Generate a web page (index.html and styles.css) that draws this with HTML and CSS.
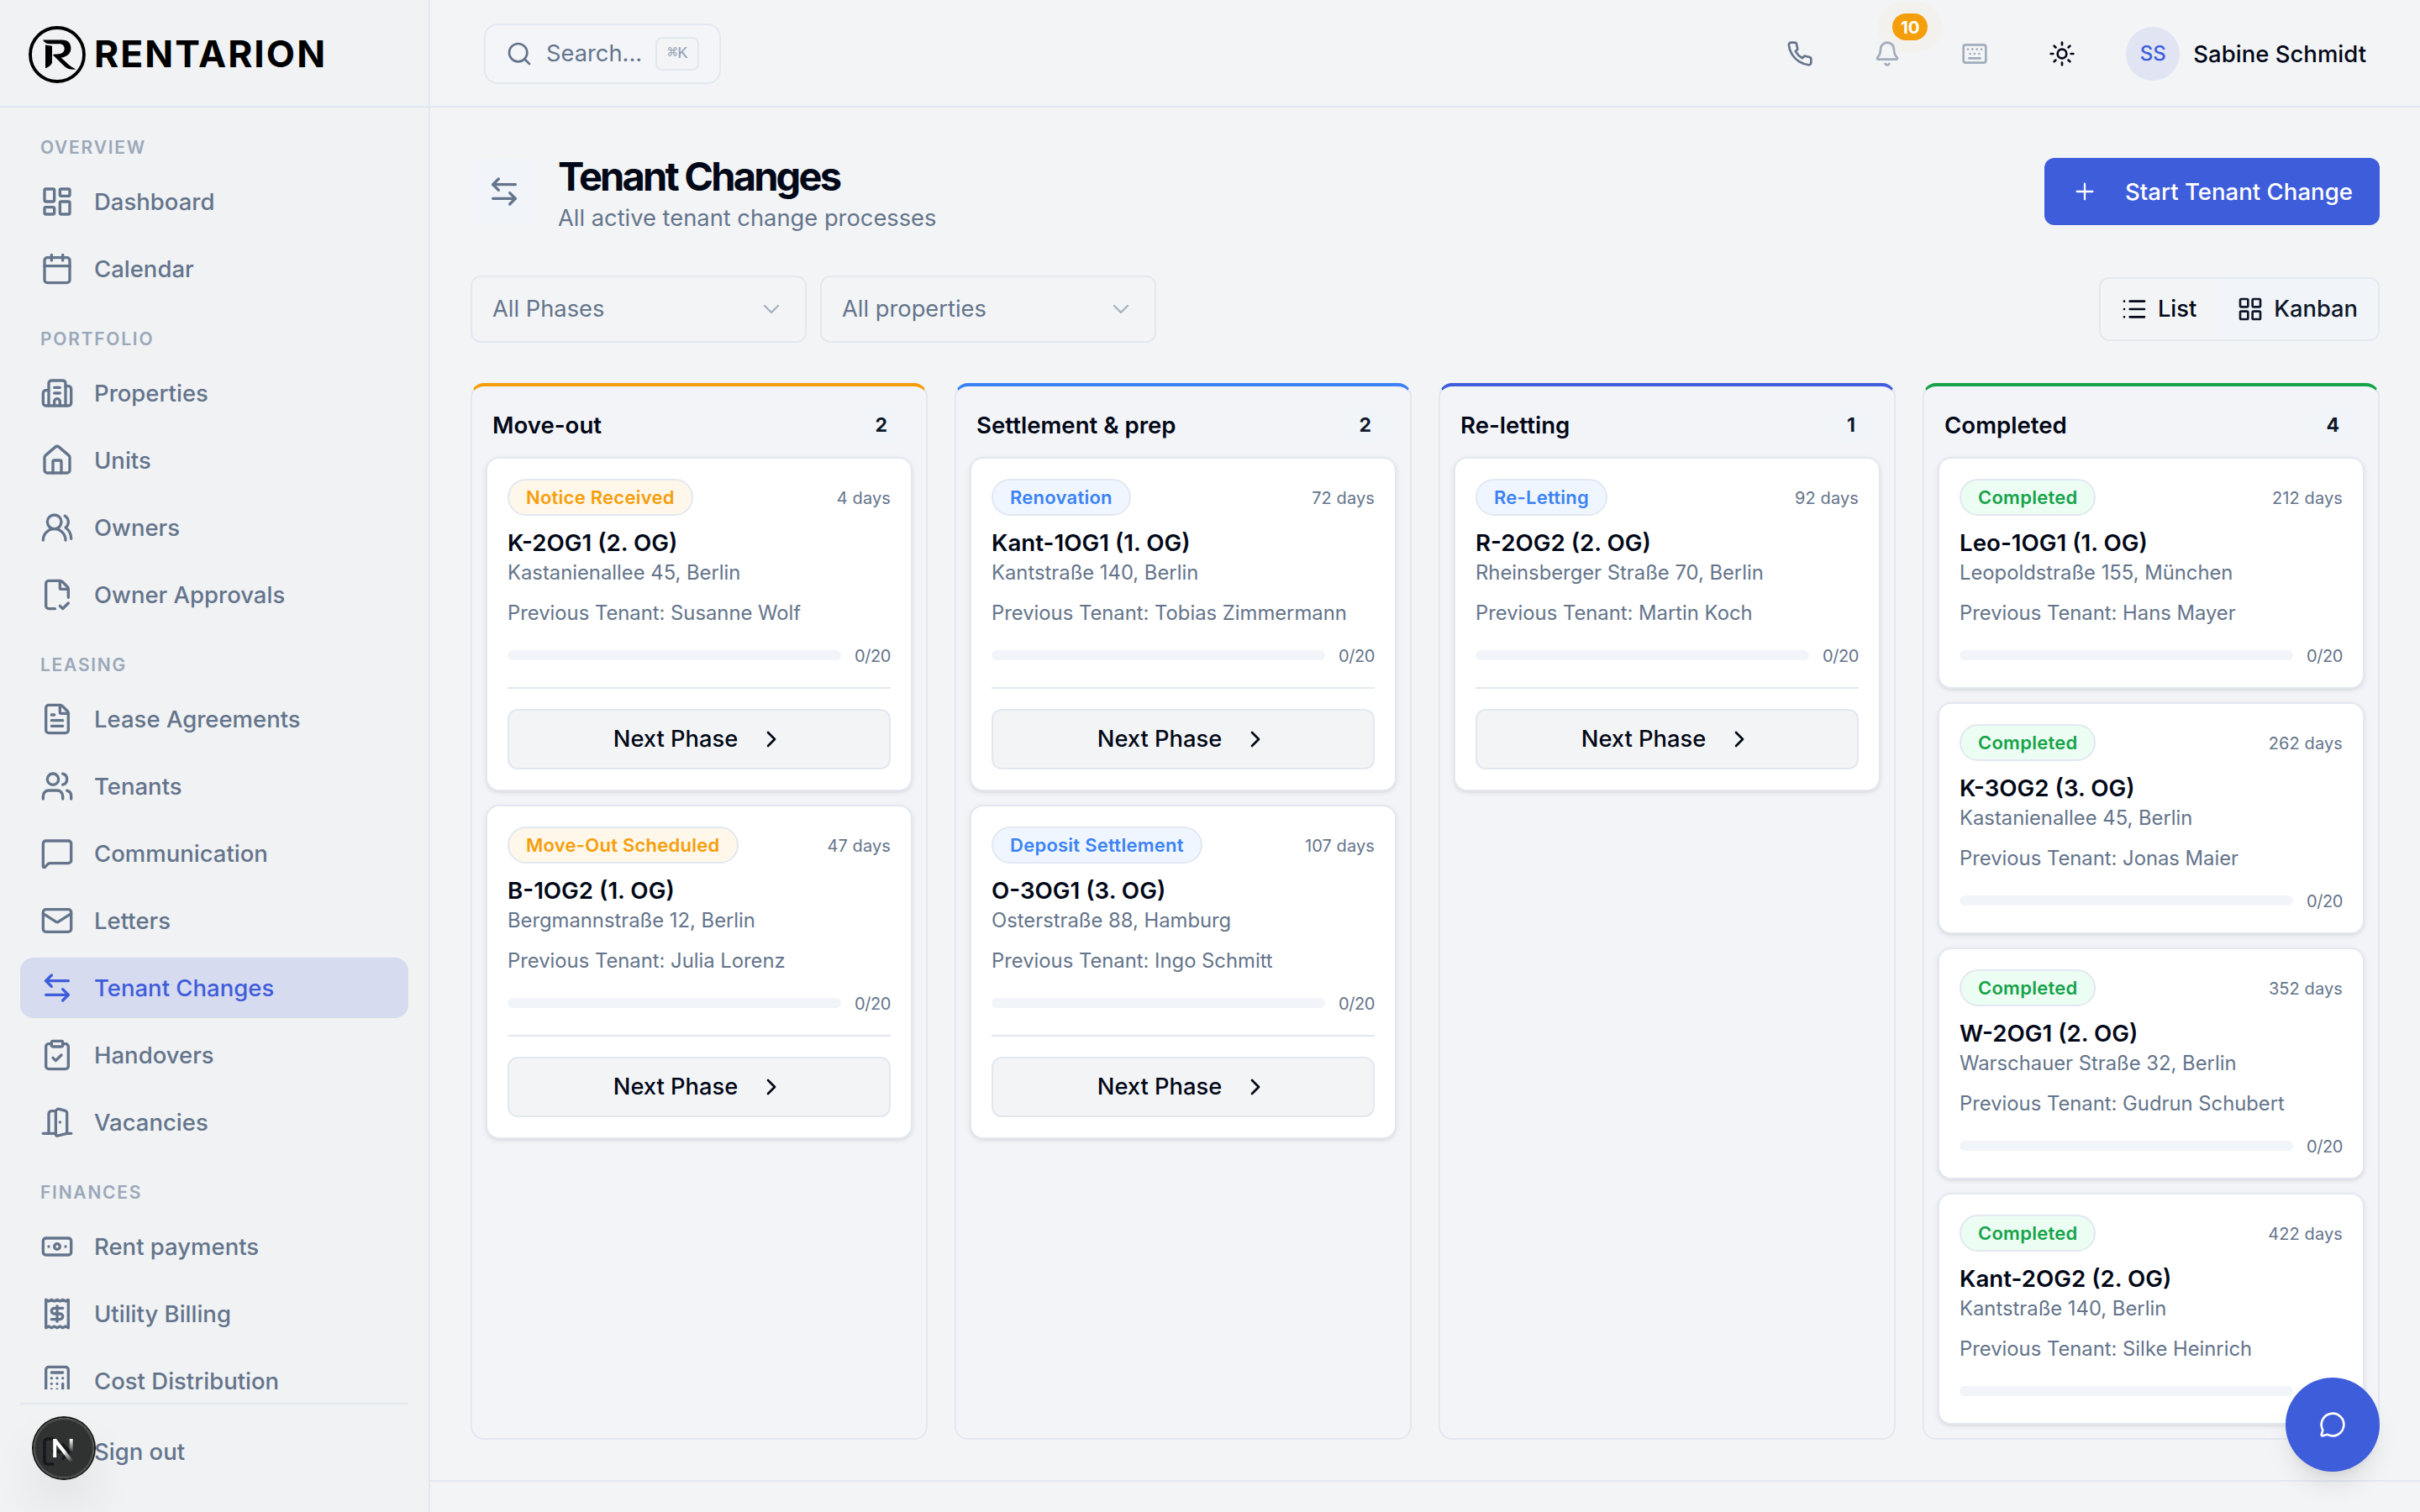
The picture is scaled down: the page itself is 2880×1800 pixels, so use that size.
FILE: index.html
```html
<!DOCTYPE html>
<html lang="en">

<head>
  <meta charset="utf-8">
  <meta name="viewport" content="width=device-width, initial-scale=1">
  <title>Tenant Changes - Rentarion</title>
  <link rel="stylesheet" href="styles.css">
</head>

<body>
  <!-- icon sprite -->
  <svg class="sprite" width="0" height="0">
    <symbol id="i-dashboard" viewBox="0 0 24 24"><rect width="7" height="9" x="3" y="3" rx="1"/><rect width="7" height="5" x="14" y="3" rx="1"/><rect width="7" height="9" x="14" y="12" rx="1"/><rect width="7" height="5" x="3" y="16" rx="1"/></symbol>
    <symbol id="i-calendar" viewBox="0 0 24 24"><path d="M8 2v4M16 2v4"/><rect width="18" height="18" x="3" y="4" rx="2"/><path d="M3 10h18"/></symbol>
    <symbol id="i-building" viewBox="0 0 24 24"><path d="M10 12h4M10 8h4M14 21v-3a2 2 0 0 0-4 0v3"/><path d="M6 10H4a2 2 0 0 0-2 2v7a2 2 0 0 0 2 2h16a2 2 0 0 0 2-2V9a2 2 0 0 0-2-2h-2"/><path d="M6 21V5a2 2 0 0 1 2-2h8a2 2 0 0 1 2 2v16"/></symbol>
    <symbol id="i-house" viewBox="0 0 24 24"><path d="M15 21v-8a1 1 0 0 0-1-1h-4a1 1 0 0 0-1 1v8"/><path d="M3 10a2 2 0 0 1 .709-1.528l7-5.999a2 2 0 0 1 2.582 0l7 5.999A2 2 0 0 1 21 10v9a2 2 0 0 1-2 2H5a2 2 0 0 1-2-2z"/></symbol>
    <symbol id="i-owners" viewBox="0 0 24 24"><path d="M18 21a8 8 0 0 0-16 0"/><circle cx="10" cy="8" r="5"/><path d="M22 20c0-3.37-2-6.5-4-8a5 5 0 0 0-.45-8.3"/></symbol>
    <symbol id="i-file-check" viewBox="0 0 24 24"><path d="M10.5 22H6a2 2 0 0 1-2-2V4a2 2 0 0 1 2-2h8a2.4 2.4 0 0 1 1.706.706l3.588 3.588A2.4 2.4 0 0 1 20 8v6"/><path d="M14 2v5a1 1 0 0 0 1 1h5"/><path d="m14 20 2 2 4-4"/></symbol>
    <symbol id="i-file-text" viewBox="0 0 24 24"><path d="M6 22a2 2 0 0 1-2-2V4a2 2 0 0 1 2-2h8a2.4 2.4 0 0 1 1.704.706l3.588 3.588A2.4 2.4 0 0 1 20 8v12a2 2 0 0 1-2 2z"/><path d="M14 2v5a1 1 0 0 0 1 1h5"/><path d="M10 9H8M16 13H8M16 17H8"/></symbol>
    <symbol id="i-users" viewBox="0 0 24 24"><path d="M16 21v-2a4 4 0 0 0-4-4H6a4 4 0 0 0-4 4v2"/><path d="M16 3.128a4 4 0 0 1 0 7.744"/><path d="M22 21v-2a4 4 0 0 0-3-3.87"/><circle cx="9" cy="7" r="4"/></symbol>
    <symbol id="i-message" viewBox="0 0 24 24"><path d="M22 17a2 2 0 0 1-2 2H6.828a2 2 0 0 0-1.414.586l-2.202 2.202A.71.71 0 0 1 2 21.286V5a2 2 0 0 1 2-2h16a2 2 0 0 1 2 2z"/></symbol>
    <symbol id="i-mail" viewBox="0 0 24 24"><path d="m22 7-8.991 5.727a2 2 0 0 1-2.009 0L2 7"/><rect x="2" y="4" width="20" height="16" rx="2"/></symbol>
    <symbol id="i-swap" viewBox="0 0 24 24"><path d="M8 3 4 7l4 4"/><path d="M4 7h16"/><path d="m16 21 4-4-4-4"/><path d="M20 17H4"/></symbol>
    <symbol id="i-clipboard" viewBox="0 0 24 24"><rect width="8" height="4" x="8" y="2" rx="1"/><path d="M16 4h2a2 2 0 0 1 2 2v14a2 2 0 0 1-2 2H6a2 2 0 0 1-2-2V6a2 2 0 0 1 2-2h2"/><path d="m9 14 2 2 4-4"/></symbol>
    <symbol id="i-door" viewBox="0 0 24 24"><path d="M11 20H2"/><path d="M11 4.562v16.157a1 1 0 0 0 1.242.97L19 20V5.562a2 2 0 0 0-1.515-1.94l-4-1A2 2 0 0 0 11 4.561z"/><path d="M11 4H8a2 2 0 0 0-2 2v14"/><path d="M14 12h.01"/><path d="M22 20h-3"/></symbol>
    <symbol id="i-banknote" viewBox="0 0 24 24"><rect width="20" height="12" x="2" y="6" rx="2"/><circle cx="12" cy="12" r="2"/><path d="M6 12h.01M18 12h.01"/></symbol>
    <symbol id="i-receipt" viewBox="0 0 24 24"><path d="M4 2v20l2-1 2 1 2-1 2 1 2-1 2 1 2-1 2 1V2l-2 1-2-1-2 1-2-1-2 1-2-1-2 1Z"/><path d="M16 8h-6a2 2 0 1 0 0 4h4a2 2 0 1 1 0 4H8"/><path d="M12 17.5v-11"/></symbol>
    <symbol id="i-calculator" viewBox="0 0 24 24"><rect width="16" height="20" x="4" y="2" rx="2"/><path d="M8 6h8M16 14v4M16 10h.01M12 10h.01M8 10h.01M12 14h.01M8 14h.01M12 18h.01M8 18h.01"/></symbol>
    <symbol id="i-logout" viewBox="0 0 24 24"><path d="m16 17 5-5-5-5"/><path d="M21 12H9"/><path d="M9 21H5a2 2 0 0 1-2-2V5a2 2 0 0 1 2-2h4"/></symbol>
    <symbol id="i-search" viewBox="0 0 24 24"><path d="m21 21-4.34-4.34"/><circle cx="11" cy="11" r="8"/></symbol>
    <symbol id="i-phone" viewBox="0 0 24 24"><path d="M22 16.92v3a2 2 0 0 1-2.18 2 19.79 19.79 0 0 1-8.63-3.07 19.5 19.5 0 0 1-6-6 19.79 19.79 0 0 1-3.07-8.67A2 2 0 0 1 4.11 2h3a2 2 0 0 1 2 1.72 12.84 12.84 0 0 0 .7 2.81 2 2 0 0 1-.45 2.11L8.09 9.91a16 16 0 0 0 6 6l1.27-1.27a2 2 0 0 1 2.11-.45 12.84 12.84 0 0 0 2.81.7A2 2 0 0 1 22 16.92z"/></symbol>
    <symbol id="i-bell" viewBox="0 0 24 24"><path d="M10.268 21a2 2 0 0 0 3.464 0"/><path d="M3.262 15.326A1 1 0 0 0 4 17h16a1 1 0 0 0 .74-1.673C19.41 13.956 18 12.499 18 8A6 6 0 0 0 6 8c0 4.499-1.411 5.956-2.738 7.326"/></symbol>
    <symbol id="i-keyboard" viewBox="0 0 24 24"><rect width="20" height="16" x="2" y="4" rx="2"/><path d="M10 8h.01M12 12h.01M14 8h.01M16 12h.01M18 8h.01M6 8h.01M7 16h10M8 12h.01"/></symbol>
    <symbol id="i-sun" viewBox="0 0 24 24"><circle cx="12" cy="12" r="4"/><path d="M12 2v2M12 20v2M4.93 4.93l1.41 1.41M17.66 17.66l1.41 1.41M2 12h2M20 12h2M6.34 17.66l-1.41 1.41M19.07 4.93l-1.41 1.41"/></symbol>
    <symbol id="i-plus" viewBox="0 0 24 24"><path d="M5 12h14M12 5v14"/></symbol>
    <symbol id="i-down" viewBox="0 0 24 24"><path d="m6 9 6 6 6-6"/></symbol>
    <symbol id="i-right" viewBox="0 0 24 24"><path d="m9 18 6-6-6-6"/></symbol>
    <symbol id="i-list" viewBox="0 0 24 24"><path d="M3 5h.01M3 12h.01M3 19h.01M8 5h13M8 12h13M8 19h13"/></symbol>
    <symbol id="i-grid" viewBox="0 0 24 24"><rect width="7" height="7" x="3" y="3" rx="1"/><rect width="7" height="7" x="14" y="3" rx="1"/><rect width="7" height="7" x="14" y="14" rx="1"/><rect width="7" height="7" x="3" y="14" rx="1"/></symbol>
    <symbol id="i-chat" viewBox="0 0 24 24"><path d="M2.992 16.342a2 2 0 0 1 .094 1.167l-1.065 3.29a1 1 0 0 0 1.236 1.168l3.413-.998a2 2 0 0 1 1.099.092 10 10 0 1 0-4.777-4.719"/></symbol>
  </svg>

  <div class="app">
    <aside class="sidebar">
      <div class="brand">
        <svg class="brand-mark" viewBox="0 0 68 68">
          <circle cx="34" cy="34" r="32" fill="none" stroke="#000" stroke-width="3.8"/>
          <path d="M17 16.5H40C47 16.5 50.4 20.500 50.4 26.500C50.400 32.500 46 36.800 38.700 37.600C45 43.500 50 49 56.700 51.500C51 52 46.500 51.500 43 48.300L28.700 34.200C31 33.300 33 33.600 36 33.300C40.500 32.800 42.700 30 42.700 27C42.700 23.500 40.500 21.200 36.700 21.200H25C21.500 21.200 18.500 19.500 17 16.500Z"/>
          <path d="M20 22.500L28 23.700V43.500C26.500 47 23.500 49.300 20 50.200Z"/>
        </svg>
        <span class="brand-name">RENTARION</span>
      </div>

      <nav class="nav">
        <div class="nav-group">
          <h2 class="nav-label">OVERVIEW</h2>
          <a class="nav-item"><svg class="icon"><use href="#i-dashboard"/></svg>Dashboard</a>
          <a class="nav-item"><svg class="icon"><use href="#i-calendar"/></svg>Calendar</a>
        </div>
        <div class="nav-group">
          <h2 class="nav-label">PORTFOLIO</h2>
          <a class="nav-item"><svg class="icon"><use href="#i-building"/></svg>Properties</a>
          <a class="nav-item"><svg class="icon"><use href="#i-house"/></svg>Units</a>
          <a class="nav-item"><svg class="icon"><use href="#i-owners"/></svg>Owners</a>
          <a class="nav-item"><svg class="icon"><use href="#i-file-check"/></svg>Owner Approvals</a>
        </div>
        <div class="nav-group">
          <h2 class="nav-label">LEASING</h2>
          <a class="nav-item"><svg class="icon"><use href="#i-file-text"/></svg>Lease Agreements</a>
          <a class="nav-item"><svg class="icon"><use href="#i-users"/></svg>Tenants</a>
          <a class="nav-item"><svg class="icon"><use href="#i-message"/></svg>Communication</a>
          <a class="nav-item"><svg class="icon"><use href="#i-mail"/></svg>Letters</a>
          <a class="nav-item active"><svg class="icon"><use href="#i-swap"/></svg>Tenant Changes</a>
          <a class="nav-item"><svg class="icon"><use href="#i-clipboard"/></svg>Handovers</a>
          <a class="nav-item"><svg class="icon"><use href="#i-door"/></svg>Vacancies</a>
        </div>
        <div class="nav-group">
          <h2 class="nav-label">FINANCES</h2>
          <a class="nav-item"><svg class="icon"><use href="#i-banknote"/></svg>Rent payments</a>
          <a class="nav-item"><svg class="icon"><use href="#i-receipt"/></svg>Utility Billing</a>
          <a class="nav-item"><svg class="icon"><use href="#i-calculator"/></svg>Cost Distribution</a>
        </div>
      </nav>

      <div class="sidebar-footer">
        <a class="nav-item"><svg class="icon"><use href="#i-logout"/></svg>Sign out</a>
      </div>
    </aside>

    <div class="page">
      <header class="topbar">
        <button class="search">
          <svg class="icon icon-sm"><use href="#i-search"/></svg>
          <span>Search...</span>
          <kbd>⌘K</kbd>
        </button>
        <div class="topbar-actions">
          <button class="icon-btn"><svg class="icon icon-sm"><use href="#i-phone"/></svg></button>
          <button class="icon-btn faded"><svg class="icon icon-sm"><use href="#i-bell"/></svg><span class="count-dot">10</span></button>
          <button class="icon-btn faded"><svg class="icon icon-sm"><use href="#i-keyboard"/></svg></button>
          <button class="icon-btn dark"><svg class="icon icon-sm"><use href="#i-sun"/></svg></button>
          <button class="user"><span class="avatar">SS</span>Sabine Schmidt</button>
        </div>
      </header>

      <main class="content">
        <div class="page-head">
          <div class="page-icon"><svg class="icon"><use href="#i-swap"/></svg></div>
          <div class="page-title">
            <h1>Tenant Changes</h1>
            <p>All active tenant change processes</p>
          </div>
          <button class="btn-primary"><svg class="icon icon-sm thin"><use href="#i-plus"/></svg>Start Tenant Change</button>
        </div>

        <div class="filters">
          <button class="select">All Phases<svg class="icon icon-sm thin"><use href="#i-down"/></svg></button>
          <button class="select">All properties<svg class="icon icon-sm thin"><use href="#i-down"/></svg></button>
          <div class="view-toggle">
            <button><svg class="icon icon-sm"><use href="#i-list"/></svg>List</button>
            <button class="on"><svg class="icon icon-sm"><use href="#i-grid"/></svg>Kanban</button>
          </div>
        </div>

        <div class="board">
          <section class="column orange">
            <div class="column-head"><h3>Move-out</h3><span class="count">2</span></div>
            <article class="card">
              <div class="card-top"><span class="badge">Notice Received</span><span class="days">4 days</span></div>
              <h4>K-2OG1 (2. OG)</h4>
              <p class="address">Kastanienallee 45, Berlin</p>
              <p class="tenant">Previous Tenant: Susanne Wolf</p>
              <div class="progress"><div class="bar"></div><span>0/20</span></div>
              <div class="card-action"><button>Next Phase<svg class="icon icon-sm"><use href="#i-right"/></svg></button></div>
            </article>
            <article class="card">
              <div class="card-top"><span class="badge">Move-Out Scheduled</span><span class="days">47 days</span></div>
              <h4>B-1OG2 (1. OG)</h4>
              <p class="address">Bergmannstraße 12, Berlin</p>
              <p class="tenant">Previous Tenant: Julia Lorenz</p>
              <div class="progress"><div class="bar"></div><span>0/20</span></div>
              <div class="card-action"><button>Next Phase<svg class="icon icon-sm"><use href="#i-right"/></svg></button></div>
            </article>
          </section>

          <section class="column blue">
            <div class="column-head"><h3>Settlement &amp; prep</h3><span class="count">2</span></div>
            <article class="card">
              <div class="card-top"><span class="badge">Renovation</span><span class="days">72 days</span></div>
              <h4>Kant-1OG1 (1. OG)</h4>
              <p class="address">Kantstraße 140, Berlin</p>
              <p class="tenant">Previous Tenant: Tobias Zimmermann</p>
              <div class="progress"><div class="bar"></div><span>0/20</span></div>
              <div class="card-action"><button>Next Phase<svg class="icon icon-sm"><use href="#i-right"/></svg></button></div>
            </article>
            <article class="card">
              <div class="card-top"><span class="badge">Deposit Settlement</span><span class="days">107 days</span></div>
              <h4>O-3OG1 (3. OG)</h4>
              <p class="address">Osterstraße 88, Hamburg</p>
              <p class="tenant">Previous Tenant: Ingo Schmitt</p>
              <div class="progress"><div class="bar"></div><span>0/20</span></div>
              <div class="card-action"><button>Next Phase<svg class="icon icon-sm"><use href="#i-right"/></svg></button></div>
            </article>
          </section>

          <section class="column blue indigo">
            <div class="column-head"><h3>Re-letting</h3><span class="count">1</span></div>
            <article class="card">
              <div class="card-top"><span class="badge">Re-Letting</span><span class="days">92 days</span></div>
              <h4>R-2OG2 (2. OG)</h4>
              <p class="address">Rheinsberger Straße 70, Berlin</p>
              <p class="tenant">Previous Tenant: Martin Koch</p>
              <div class="progress"><div class="bar"></div><span>0/20</span></div>
              <div class="card-action"><button>Next Phase<svg class="icon icon-sm"><use href="#i-right"/></svg></button></div>
            </article>
          </section>

          <section class="column green">
            <div class="column-head"><h3>Completed</h3><span class="count">4</span></div>
            <article class="card">
              <div class="card-top"><span class="badge">Completed</span><span class="days">212 days</span></div>
              <h4>Leo-1OG1 (1. OG)</h4>
              <p class="address">Leopoldstraße 155, München</p>
              <p class="tenant">Previous Tenant: Hans Mayer</p>
              <div class="progress"><div class="bar"></div><span>0/20</span></div>
            </article>
            <article class="card">
              <div class="card-top"><span class="badge">Completed</span><span class="days">262 days</span></div>
              <h4>K-3OG2 (3. OG)</h4>
              <p class="address">Kastanienallee 45, Berlin</p>
              <p class="tenant">Previous Tenant: Jonas Maier</p>
              <div class="progress"><div class="bar"></div><span>0/20</span></div>
            </article>
            <article class="card">
              <div class="card-top"><span class="badge">Completed</span><span class="days">352 days</span></div>
              <h4>W-2OG1 (2. OG)</h4>
              <p class="address">Warschauer Straße 32, Berlin</p>
              <p class="tenant">Previous Tenant: Gudrun Schubert</p>
              <div class="progress"><div class="bar"></div><span>0/20</span></div>
            </article>
            <article class="card">
              <div class="card-top"><span class="badge">Completed</span><span class="days">422 days</span></div>
              <h4>Kant-2OG2 (2. OG)</h4>
              <p class="address">Kantstraße 140, Berlin</p>
              <p class="tenant">Previous Tenant: Silke Heinrich</p>
              <div class="progress"><div class="bar"></div><span>0/20</span></div>
            </article>
          </section>
        </div>
      </main>

      <footer class="footer"></footer>
    </div>
  </div>

  <div class="dev-badge">
    <svg viewBox="0 0 72 72">
      <defs>
        <linearGradient id="fade-diag" gradientUnits="userSpaceOnUse" x1="36" y1="40" x2="46" y2="52"><stop stop-color="#fff"/><stop offset="1" stop-color="#fff" stop-opacity="0"/></linearGradient>
        <linearGradient id="fade-bar" gradientUnits="userSpaceOnUse" x1="0" y1="25" x2="0" y2="41"><stop stop-color="#fff"/><stop offset="1" stop-color="#fff" stop-opacity="0"/></linearGradient>
      </defs>
      <path d="M25.200 47V25" stroke="#fff" stroke-width="4"/>
      <path d="M25 26L45.500 52" stroke="url(#fade-diag)" stroke-width="4.400"/>
      <path d="M44.700 25V41" stroke="url(#fade-bar)" stroke-width="4"/>
    </svg>
  </div>

  <button class="chat-fab"><svg class="icon icon-sm"><use href="#i-chat"/></svg></button>
</body>

</html>
```
FILE: styles.css
```css
* {
  box-sizing: border-box;
  margin: 0;
  padding: 0;
}

body {
  width: 2880px;
  height: 1800px;
  overflow: hidden;
  background: #f3f4f6;
  color: #020817;
  font-family: Inter, "Liberation Sans", sans-serif;
  font-size: 27.3px;
  line-height: 40px;
}

h1,
h2,
h3,
h4 {
  font-weight: 600;
}

button {
  display: flex;
  align-items: center;
  border: none;
  background: none;
  color: inherit;
  font: inherit;
  cursor: pointer;
}

.sprite {
  position: absolute;
}

.icon {
  width: 40px;
  height: 40px;
  flex: none;
  fill: none;
  stroke: currentColor;
  stroke-width: 2;
  stroke-linecap: round;
  stroke-linejoin: round;
}

.icon-sm {
  width: 32px;
  height: 32px;
}

.icon.thin {
  stroke-width: 1.7;
}

.app {
  display: flex;
  height: 1800px;
}

/* sidebar */
.sidebar {
  display: flex;
  flex-direction: column;
  width: 512px;
  flex: none;
  border-right: 2px solid #e2e8f0;
  background: #f0f2f4;
}

.brand {
  display: flex;
  align-items: center;
  gap: 10px;
  height: 128px;
  flex: none;
  padding: 2px 0 0 34px;
  box-shadow: inset 0 -2px #e2e8f0;
}

.brand-mark {
  width: 68px;
  height: 68px;
}

.brand-name {
  padding-bottom: 2px;
  color: #000;
  font-size: 44.5px;
  font-weight: 650;
  letter-spacing: 2px;
}

.nav {
  display: flex;
  flex-direction: column;
  gap: 26px;
  flex: 1;
  min-height: 0;
  overflow: hidden;
  padding: 26px 24px 0;
}

.nav-group {
  display: flex;
  flex-direction: column;
  gap: 8px;
}

.nav-label {
  height: 42px;
  padding: 0 24px;
  color: #9ba8b9;
  font-size: 21px;
  line-height: 43px;
  letter-spacing: 1.75px;
}

.nav-item {
  display: flex;
  align-items: center;
  gap: 24px;
  height: 72px;
  padding: 0 24px;
  border-radius: 16px;
  color: #64748b;
  font-size: 27.5px;
  font-weight: 530;
}

.nav-item.active {
  background: #d6dbef;
  color: #3e5ddb;
}

.sidebar-footer {
  height: 130px;
  flex: none;
  margin: 16px 24px 0;
  padding-top: 20px;
  border-top: 2px solid #e2e8f0;
}

/* top bar */
.page {
  flex: 1;
  min-width: 0;
}

.topbar {
  display: flex;
  align-items: center;
  justify-content: space-between;
  height: 128px;
  padding: 0 48px 0 64px;
  box-shadow: inset 0 -2px #e2e8f0;
}

.search {
  gap: 16px;
  height: 72px;
  padding: 0 24px;
  border: 2px solid #e2e8f0;
  border-radius: 16px;
  background: #f3f5f9;
  color: #64748b;
}

.search kbd {
  height: 40px;
  padding: 0 12px;
  border: 2px solid #e2e8f0;
  border-radius: 8px;
  background: #f3f4f6;
  color: #94a3b8;
  font: 20px/36px "Liberation Mono", monospace;
}

.topbar-actions {
  display: flex;
  align-items: center;
  gap: 16px;
}

.icon-btn {
  position: relative;
  justify-content: center;
  width: 88px;
  height: 88px;
  color: #64748b;
}

.icon-btn.faded {
  color: #a1acbc;
}

.icon-btn.dark {
  color: #020817;
}

.count-dot {
  position: absolute;
  top: -4px;
  left: 50px;
  width: 42px;
  height: 32px;
  border-radius: 16px;
  background: #f59e0b;
  color: #fff;
  font-size: 20.5px;
  font-weight: 700;
  line-height: 33px;
  text-align: center;
}

/* pulse ring around the counter */
.count-dot::before {
  content: "";
  position: absolute;
  z-index: -1;
  inset: -14px -17px;
  border-radius: 30px;
  background: #f59e0b;
  opacity: .03;
}

.user {
  gap: 16px;
  padding: 0 16px;
  font-size: 27.5px;
  font-weight: 530;
}

.avatar {
  width: 64px;
  height: 64px;
  border-radius: 50%;
  background: #e1e4f3;
  color: #3e5ddb;
  font-size: 24px;
  line-height: 64px;
  text-align: center;
}

/* content */
.content {
  padding: 48px;
}

.page-head {
  display: flex;
  align-items: center;
  gap: 24px;
  height: 104px;
}

.page-icon {
  display: flex;
  align-items: center;
  justify-content: center;
  width: 80px;
  height: 80px;
  border-radius: 16px;
  background: #f1f4f9;
  color: #64748b;
}

.page-title {
  flex: 1;
  padding-top: 4px;
}

.page-title h1 {
  font-size: 47px;
  font-weight: 680;
  line-height: 60px;
  letter-spacing: -2.8px;
}

.page-title p {
  color: #64748b;
}

.btn-primary {
  gap: 32px;
  height: 80px;
  padding: 0 32px;
  border-radius: 12px;
  background: #3e5ddb;
  color: #fff;
  font-size: 27.6px;
  font-weight: 530;
}

.filters {
  display: flex;
  align-items: center;
  gap: 16px;
  margin: 48px 0;
}

.select {
  justify-content: space-between;
  width: 400px;
  height: 80px;
  padding: 0 24px;
  border: 2px solid #e2e8f0;
  border-radius: 12px;
  color: #64748b;
}

.select .icon {
  color: #a6b0bf;
}

.view-toggle {
  display: flex;
  height: 76px;
  margin-left: auto;
  overflow: hidden;
  border: 2px solid #e2e8f0;
  border-radius: 12px;
}

.view-toggle button {
  gap: 12px;
  padding: 0 24px;
  font-weight: 530;
}

.view-toggle .on {
  background: #f1f5f9;
  color: #0f172a;
}

/* kanban board */
.board {
  display: grid;
  grid-template-columns: repeat(4, 1fr);
  gap: 32px;
  height: 1258px;
}

.column {
  display: flex;
  flex-direction: column;
  gap: 16px;
  padding: 16px;
  border: 2px solid #e2e8f0;
  border-top: 4px solid;
  border-radius: 16px;
  background: #f3f4f8;
}

.column-head {
  display: flex;
  align-items: center;
  justify-content: space-between;
  height: 60px;
  margin-bottom: -8px;
  padding: 0 8px;
}

.column-head h3 {
  font-size: 27.6px;
  font-weight: 570;
}

.count {
  padding: 0 22px;
  border-radius: 22px;
  background: #f1f5f9;
  color: #0f172a;
  font-size: 23px;
  font-weight: 650;
  line-height: 44px;
}

.card {
  padding: 24px;
  border: 2px solid #e2e8f0;
  border-radius: 16px;
  background: #fff;
  box-shadow: 0 2px 6px rgba(0, 0, 0, .08), 0 2px 4px -2px rgba(0, 0, 0, .08);
}

.card-top {
  display: flex;
  align-items: center;
  justify-content: space-between;
}

.badge {
  height: 44px;
  padding: 0 20px;
  border: 2px solid #e2e8f0;
  border-radius: 22px;
  font-size: 22px;
  font-weight: 640;
  line-height: 40px;
  letter-spacing: .25px;
}

.days,
.progress {
  color: #64748b;
  font-size: 20px;
}

.days {
  padding-top: 1px;
  letter-spacing: .1px;
}

.card h4 {
  margin-top: 12px;
  font-size: 27.7px;
  font-weight: 570;
}

.address,
.tenant {
  color: #64748b;
  font-size: 23.8px;
  line-height: 32px;
}

.tenant {
  margin: 16px 0 20px;
}

.progress {
  display: flex;
  align-items: center;
  gap: 16px;
  height: 28px;
  line-height: 28px;
}

.progress span {
  padding-top: 2px;
  letter-spacing: -.4px;
}

.bar {
  flex: 1;
  height: 12px;
  border-radius: 6px;
  background: #f1f5f9;
}

.card-action {
  margin-top: 24px;
  padding-top: 24px;
  border-top: 2px solid #e2e8f0;
}

.card-action button {
  justify-content: center;
  gap: 24px;
  width: 100%;
  height: 72px;
  border: 2px solid #e2e8f0;
  border-radius: 12px;
  background: #f3f4f6;
  font-weight: 530;
}

.orange {
  border-top-color: #f59e0b;
}

.orange .badge {
  background: #fff7e9;
  color: #f59e0b;
}

.blue {
  border-top-color: #3b82f6;
}

.blue .badge {
  background: #eff6ff;
  color: #3b82f6;
}

.indigo {
  border-top-color: #3e5ddb;
}

.green {
  border-top-color: #16a34a;
}

.green .badge {
  background: #ecfdf3;
  color: #16a34a;
}

.footer {
  height: 120px;
  border-top: 2px solid #e2e8f0;
}

/* floating buttons */
.dev-badge {
  position: absolute;
  left: 40px;
  top: 1688px;
  width: 72px;
  height: 72px;
  border-radius: 50%;
  background: rgba(0, 0, 0, .8);
  box-shadow: 0 0 0 2px #171717, inset 0 0 0 2px rgba(255, 255, 255, .14), 0 32px 64px -16px rgba(0, 0, 0, .24);
}

.chat-fab {
  position: absolute;
  right: 48px;
  bottom: 48px;
  justify-content: center;
  width: 112px;
  height: 112px;
  border-radius: 50%;
  background: #3e5ddb;
  color: #fff;
  box-shadow: 0 20px 30px -6px rgba(0, 0, 0, .1), 0 8px 12px -8px rgba(0, 0, 0, .1);
}
```
